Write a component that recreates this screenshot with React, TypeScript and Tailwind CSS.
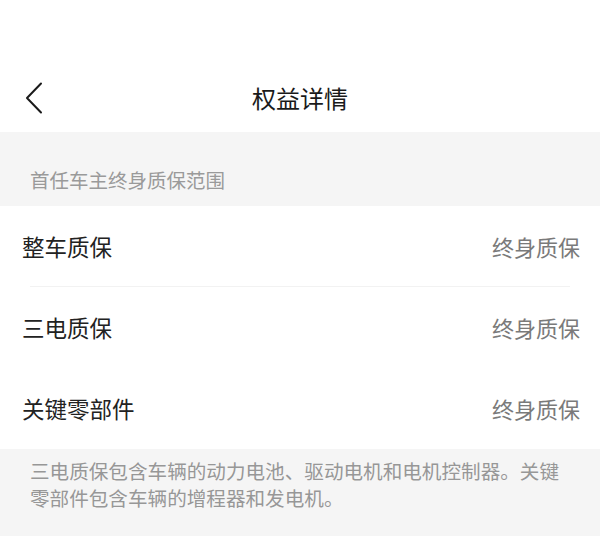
const rows = [
  { label: '整车质保', value: '终身质保' },
  { label: '三电质保', value: '终身质保' },
  { label: '关键零部件', value: '终身质保' },
]

const font = { fontFamily: '"Noto Sans CJK SC", "Noto Sans", sans-serif' }

function BackIcon() {
  return (
    <svg width="18" height="32" viewBox="0 0 18 32" fill="none">
      <polyline
        points="16,1.5 2,16 16,30.5"
        stroke="#1a1a1a"
        strokeWidth="2"
        strokeLinecap="round"
        strokeLinejoin="round"
      />
    </svg>
  )
}

export default function App() {
  return (
    <div className="w-[600px] h-[536px] bg-[#f5f5f5] overflow-hidden" style={font}>
      {/* header */}
      <div className="h-[132px] bg-white flex items-end">
        <div className="relative h-[68px] w-full flex items-center justify-center">
          <button className="absolute left-[25px] top-1/2 -translate-y-1/2 flex">
            <BackIcon />
          </button>
          <h1 className="text-[24px] text-[#1a1a1a] leading-none">权益详情</h1>
        </div>
      </div>

      {/* section title */}
      <div className="h-[74px] flex items-end pb-[13px] px-[30px]">
        <span className="text-[19.5px] leading-[26px] text-[#9a9a9a]">首任车主终身质保范围</span>
      </div>

      {/* list */}
      <div className="bg-white">
        {rows.map((row, i) => (
          <div key={row.label}>
            <div className="h-[81px] px-[22px] flex items-center justify-between">
              <span className="text-[22.5px] text-[#222222]">{row.label}</span>
              <span className="text-[22px] text-[#7a7a7a] mr-[-2px]">{row.value}</span>
            </div>
            {i === 0 && <div className="mx-[30px] -mt-px h-px bg-[#f2f2f2]" />}
          </div>
        ))}
      </div>

      {/* note */}
      <div className="px-[30px] pt-[8px]">
        <p className="text-[19.6px] leading-[27px] text-[#979797]">
          三电质保包含车辆的动力电池、驱动电机和电机控制器。关键零部件包含车辆的增程器和发电机。
        </p>
      </div>
    </div>
  )
}
